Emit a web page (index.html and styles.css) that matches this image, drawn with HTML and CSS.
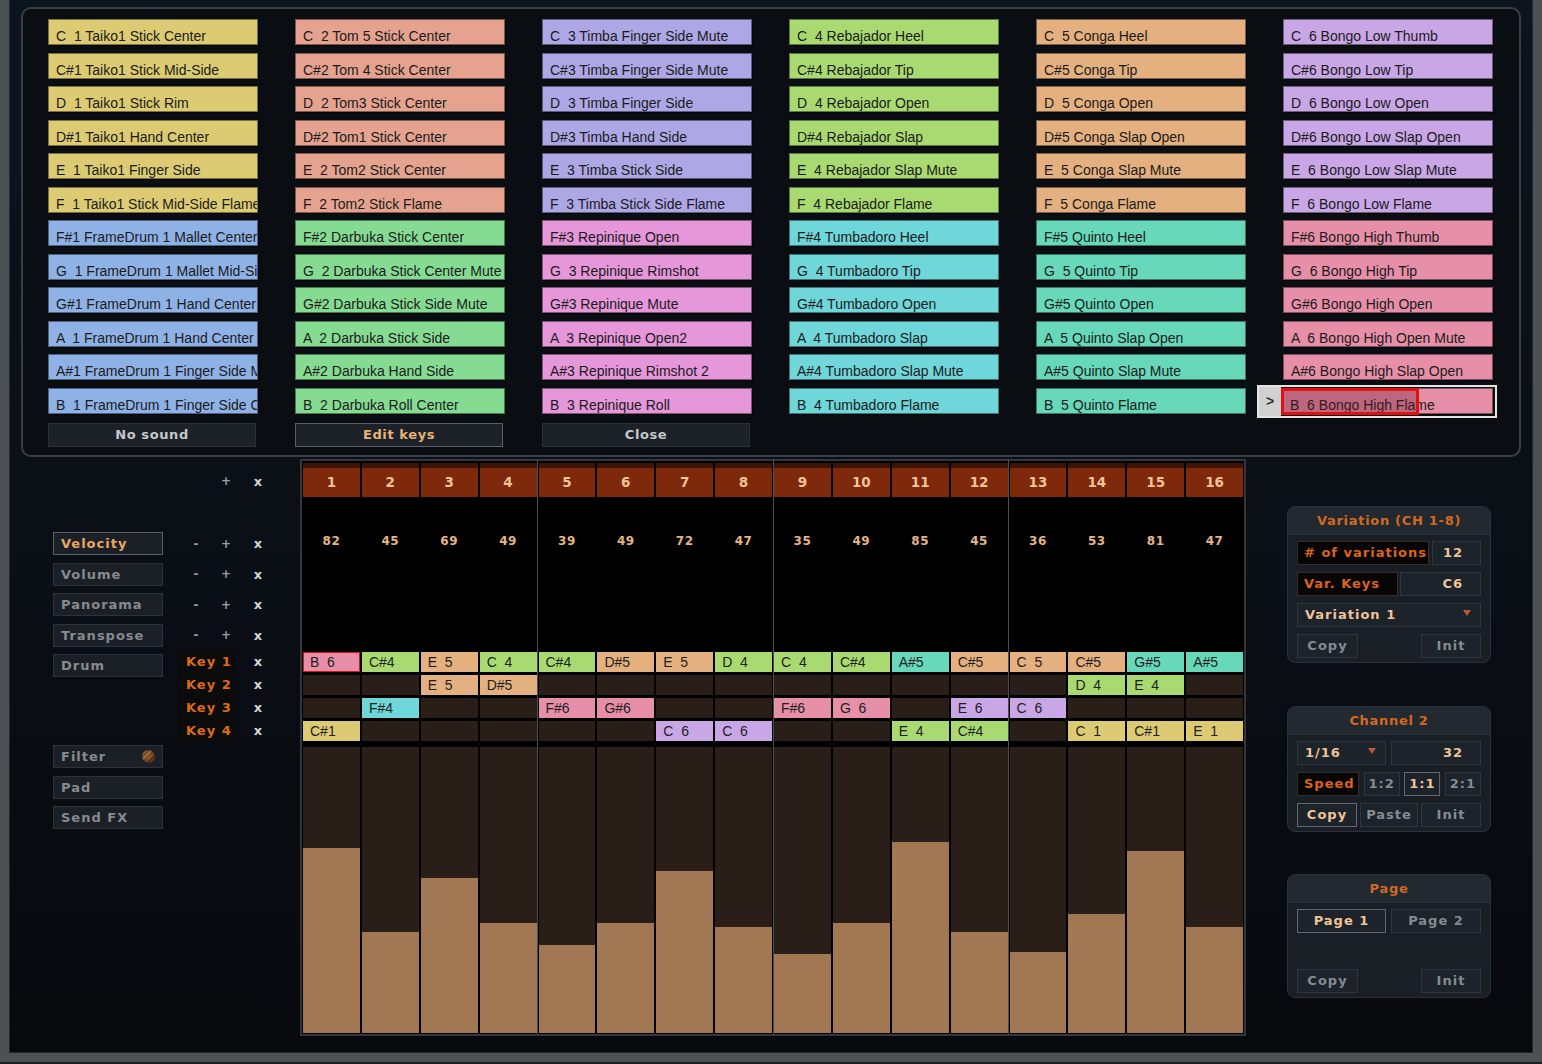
FILE: index.html
```html
<!DOCTYPE html>
<html lang="en">
<head>
    <meta charset="UTF-8">
    <title>Percussion Step Sequencer</title>
    <link rel="stylesheet" href="styles.css">
</head>
<body>
<div class="frame">

    <div class="key-popup">
        <div class="key-grid" id="key-grid"></div>
        <div class="popup-buttons">
            <button class="btn">No sound</button>
            <button class="btn active">Edit keys</button>
            <button class="btn">Close</button>
        </div>
    </div>

    <div class="main">
        <div class="side">
            <div class="ctl-row top-row">
                <span class="op"></span>
                <span class="op plus">+</span>
                <span class="op close">x</span>
            </div>
            <div class="ctl-row first">
                <div class="param active">Velocity</div>
                <span class="op minus">-</span>
                <span class="op plus">+</span>
                <span class="op close">x</span>
            </div>
            <div class="ctl-row">
                <div class="param">Volume</div>
                <span class="op minus">-</span>
                <span class="op plus">+</span>
                <span class="op close">x</span>
            </div>
            <div class="ctl-row">
                <div class="param">Panorama</div>
                <span class="op minus">-</span>
                <span class="op plus">+</span>
                <span class="op close">x</span>
            </div>
            <div class="ctl-row">
                <div class="param">Transpose</div>
                <span class="op minus">-</span>
                <span class="op plus">+</span>
                <span class="op close">x</span>
            </div>
            <div class="drum-row">
                <div class="param">Drum</div>
                <div class="key-labels">
                    <div>Key 1</div>
                    <div>Key 2</div>
                    <div>Key 3</div>
                    <div>Key 4</div>
                </div>
                <div class="key-close">
                    <div>x</div>
                    <div>x</div>
                    <div>x</div>
                    <div>x</div>
                </div>
            </div>
            <div class="ctl-row extra">
                <div class="param">Filter <span class="knob"></span></div>
            </div>
            <div class="ctl-row">
                <div class="param">Pad</div>
            </div>
            <div class="ctl-row">
                <div class="param">Send FX</div>
            </div>
        </div>

        <div class="steps" id="steps"></div>

        <div class="panels">
            <div class="panel var-panel">
                <div class="panel-head">Variation (CH 1-8)</div>
                <div class="panel-body">
                    <div class="prow">
                        <div class="lbl w132"># of variations</div>
                        <div class="pbtn val w49">12</div>
                    </div>
                    <div class="prow">
                        <div class="lbl w101">Var. Keys</div>
                        <div class="pbtn val w81">C6</div>
                    </div>
                    <div class="prow">
                        <div class="pbtn drop w184">Variation 1</div>
                    </div>
                    <div class="prow">
                        <div class="pbtn w61">Copy</div>
                        <div class="pbtn w60">Init</div>
                    </div>
                </div>
            </div>

            <div class="panel chan-panel">
                <div class="panel-head">Channel 2</div>
                <div class="panel-body">
                    <div class="prow">
                        <div class="pbtn drop w89">1/16</div>
                        <div class="pbtn val w90">32</div>
                    </div>
                    <div class="prow">
                        <div class="lbl w62">Speed</div>
                        <div class="pbtn w36">1:2</div>
                        <div class="pbtn on w36">1:1</div>
                        <div class="pbtn w36">2:1</div>
                    </div>
                    <div class="prow">
                        <div class="pbtn on w60">Copy</div>
                        <div class="pbtn w58">Paste</div>
                        <div class="pbtn w60">Init</div>
                    </div>
                </div>
            </div>

            <div class="panel page-panel">
                <div class="panel-head">Page</div>
                <div class="panel-body">
                    <div class="prow pages">
                        <div class="pbtn on w89">Page 1</div>
                        <div class="pbtn w90">Page 2</div>
                    </div>
                    <div class="prow">
                        <div class="pbtn w61">Copy</div>
                        <div class="pbtn w60">Init</div>
                    </div>
                </div>
            </div>
        </div>
    </div>
</div>
<script src="script.js"></script>
</body>
</html>
```

FILE: styles.css
```css
* {
    box-sizing: border-box;
}

body {
    margin: 0;
    background: #1c1d1f;
    font-family: 'DejaVu Sans', sans-serif;
}

.frame {
    width: 1542px;
    height: 1062px;
    border-style: solid;
    border-color: #4e5154;
    border-width: 0 9px 9px 9px;
    background: linear-gradient(180deg, #0c141e 0%, #0b1017 45%, #07090d 100%);
    box-shadow: inset 1px 0 0 #26282b, inset -1px 0 0 #26282b, inset 0 -1px 0 #26282b;
    overflow: hidden;
}

/* key picker popup */

.key-popup {
    margin: 7px 0 0 12px;
    width: 1500px;
    height: 450px;
    border: 2px solid #3a3f46;
    border-radius: 10px;
    background: #0a0d12;
    padding: 10px 0 0 25px;
}

.key-grid {
    display: grid;
    grid-template-columns: repeat(6, 210px);
    grid-template-rows: repeat(12, 26px);
    grid-auto-flow: column;
    column-gap: 37px;
    row-gap: 7.5px;
}

.key {
    font-family: 'Liberation Sans', Arial, sans-serif;
    font-size: 14px;
    color: #1b1b1b;
    line-height: 16px;
    padding: 8px 0 0 7px;
    white-space: pre;
    overflow: hidden;
    border: 1px solid rgba(0, 0, 0, 0.45);
    box-shadow: 1px 1px 0 rgba(0, 0, 0, 0.6);
}

.key-sel {
    position: relative;
    display: flex;
    margin: -3px -4px -4px -26px;
    border: 2px solid #e4e4e4;
    background: #111;
}

.key-sel .key {
    flex: 1;
    margin: 1px 2px 2px 1px;
}

.sel-arrow {
    width: 22px;
    background: #d1d1d1;
    color: #333;
    font-family: 'Liberation Sans', Arial, sans-serif;
    font-weight: bold;
    font-size: 14px;
    text-align: center;
    line-height: 29px;
}

.sel-mark {
    position: absolute;
    left: 22px;
    top: 1px;
    width: 138px;
    height: 27px;
    border: 3px solid #e4100f;
    background: rgba(100, 20, 40, 0.33);
}

.popup-buttons {
    display: grid;
    grid-template-columns: repeat(3, 208px);
    column-gap: 39px;
    margin-top: 9px;
}

.btn {
    height: 24px;
    background: #1d2229;
    border: 1px solid #2a3037;
    color: #c4c8cc;
    font-family: 'DejaVu Sans', sans-serif;
    font-weight: bold;
    font-size: 13px;
    letter-spacing: 0.6px;
    padding: 0;
}

.btn.active {
    border-color: #595f67;
    color: #e9b275;
}

/* lower area */

.main {
    display: flex;
    margin-top: 2px;
}

.side {
    width: 291px;
    padding: 11px 0 0 44px;
}

.ctl-row {
    display: flex;
    align-items: center;
    height: 23px;
    margin-bottom: 7.5px;
}

.top-row {
    height: 22px;
    padding-left: 128px;
    margin-bottom: 40px;
}

.param {
    display: flex;
    justify-content: space-between;
    align-items: center;
    width: 110px;
    height: 23px;
    margin-right: 18px;
    padding: 0 7px;
    background: #1b2027;
    border: 1px solid #2c3239;
    color: #868b90;
    font-weight: bold;
    font-size: 13px;
    letter-spacing: 1px;
}

.param.active {
    border-color: #5b6168;
    color: #e8a85f;
}

.op {
    width: 30px;
    text-align: center;
    font-weight: bold;
    font-size: 12px;
    color: #9b9fa3;
}

.op.close {
    width: 34px;
    color: #d4d6d8;
    font-size: 13px;
}

.drum-row {
    display: flex;
    align-items: flex-start;
    margin-bottom: 3px;
}

.drum-row .param {
    margin-right: 15px;
}

.key-labels {
    width: 57px;
    margin-top: -4px;
    background: #0b0b0c;
}

.key-labels div {
    height: 23px;
    line-height: 23px;
    padding-left: 8px;
    color: #df6a14;
    font-weight: bold;
    font-size: 13px;
    letter-spacing: 1px;
}

.key-close {
    width: 34px;
    margin: -4px 0 0 6px;
}

.key-close div {
    height: 23px;
    line-height: 23px;
    text-align: center;
    color: #d4d6d8;
    font-weight: bold;
    font-size: 13px;
}

.knob {
    width: 13px;
    height: 13px;
    border-radius: 50%;
    background: repeating-linear-gradient(135deg, #7a4a24 0 2px, #a06a3a 2px 4px);
    box-shadow: inset -2px -2px 3px rgba(0, 0, 0, 0.5);
}

/* step grid */

.steps {
    width: 946px;
    height: 577px;
    border: 2px solid #33373c;
    background: #000;
    padding: 2px 1px 1px 1px;
    display: grid;
    grid-template-columns: repeat(16, 1fr);
    column-gap: 2px;
}

.step {
    position: relative;
    display: flex;
    flex-direction: column;
}

.step.beat::before {
    content: '';
    position: absolute;
    left: -1.5px;
    top: -4px;
    bottom: -1px;
    width: 1px;
    background: #4b4f55;
}

.step-num {
    height: 34px;
    border-top: 5px solid #3d1507;
    background: #7e290b;
    color: #f1c398;
    font-weight: bold;
    font-size: 13.5px;
    text-align: center;
    line-height: 28px;
}

.step-vel {
    height: 153px;
    padding-top: 37px;
    line-height: 14px;
    text-align: center;
    color: #e4b487;
    font-weight: bold;
    font-size: 12px;
    letter-spacing: 0.5px;
}

.step-key {
    height: 20px;
    margin-top: 2px;
    background: #2a1f18;
    font-family: 'Liberation Sans', Arial, sans-serif;
    font-size: 14px;
    line-height: 21px;
    color: #1e1e1e;
    padding-left: 7px;
    white-space: pre;
}

.step-key + .step-key {
    margin-top: 3px;
}

.step-key.sel {
    border: 1px solid #d8161a;
    padding-left: 6px;
    line-height: 19px;
}

.step-bar {
    height: 286px;
    margin-top: 6px;
    background: #2a1f18;
    display: flex;
    align-items: flex-end;
}

.bar-fill {
    width: 100%;
    background: #a27753;
}

/* right panels */

.panels {
    width: 204px;
    margin-left: 41px;
    padding-top: 47px;
}

.panel {
    border: 1px solid #2b3138;
    border-radius: 8px;
    background: #1a1f26;
    padding-bottom: 4px;
    overflow: hidden;
}

.var-panel {
    margin-bottom: 43px;
}

.chan-panel {
    margin-bottom: 42px;
}

.panel-head {
    height: 28px;
    line-height: 27px;
    background: #222930;
    border-bottom: 1px solid #2b3138;
    text-align: center;
    color: #d2691f;
    font-weight: bold;
    font-size: 13px;
    letter-spacing: 0.7px;
}

.panel-body {
    padding: 6px 9px 0 9px;
}

.prow {
    display: flex;
    justify-content: space-between;
    height: 24px;
    margin-bottom: 7px;
}

.prow:last-child {
    margin-bottom: 0;
}

.prow.pages {
    margin-bottom: 36px;
}

.pbtn,
.lbl {
    height: 24px;
    line-height: 22px;
    font-weight: bold;
    font-size: 13px;
    letter-spacing: 1px;
    white-space: nowrap;
}

.pbtn {
    background: #1d232a;
    border: 1px solid #30363d;
    color: #858b91;
    text-align: center;
}

.pbtn.on {
    border-color: #61676e;
    color: #efc497;
}

.lbl {
    background: #080505;
    border: 1px solid #2e2e33;
    color: #dd6418;
    padding-left: 6px;
}

.pbtn.val {
    text-align: right;
    padding-right: 17px;
    color: #efc497;
}

.pbtn.drop {
    position: relative;
    text-align: left;
    padding-left: 7px;
    color: #efc497;
}

.pbtn.drop::after {
    content: '';
    position: absolute;
    right: 9px;
    top: 6px;
    border-left: 4px solid transparent;
    border-right: 4px solid transparent;
    border-top: 6px solid #b85a3a;
}

.w36 { width: 36px; }
.w49 { width: 49px; }
.w58 { width: 58px; }
.w60 { width: 60px; }
.w61 { width: 61px; }
.w62 { width: 62px; }
.w81 { width: 81px; }
.w89 { width: 89px; }
.w90 { width: 90px; }
.w101 { width: 101px; }
.w132 { width: 132px; }
.w184 { width: 184px; }
```

FILE: script.js
```js
const NOTES = ['C', 'C#', 'D', 'D#', 'E', 'F', 'F#', 'G', 'G#', 'A', 'A#', 'B'];

// one pair per octave: [C..F, F#..B]
const PALETTE = [
    ['#dccb73', '#8fb2e6'],
    ['#e5a38f', '#86db92'],
    ['#aea7e5', '#e597da'],
    ['#a9da71', '#6fd6d9'],
    ['#e4b07f', '#67d8b9'],
    ['#c9a6e6', '#e78fa9']
];

const DRUMS = [
    ['Taiko1 Stick Center', 'Taiko1 Stick Mid-Side', 'Taiko1 Stick Rim', 'Taiko1 Hand Center',
     'Taiko1 Finger Side', 'Taiko1 Stick Mid-Side Flame', 'FrameDrum 1 Mallet Center',
     'FrameDrum 1 Mallet Mid-Side', 'FrameDrum 1 Hand Center', 'FrameDrum 1 Hand Center',
     'FrameDrum 1 Finger Side Mute', 'FrameDrum 1 Finger Side Center'],
    ['Tom 5 Stick Center', 'Tom 4 Stick Center', 'Tom3 Stick Center', 'Tom1 Stick Center',
     'Tom2 Stick Center', 'Tom2 Stick Flame', 'Darbuka Stick Center', 'Darbuka Stick Center Mute',
     'Darbuka Stick Side Mute', 'Darbuka Stick Side', 'Darbuka Hand Side', 'Darbuka Roll Center'],
    ['Timba Finger Side Mute', 'Timba Finger Side Mute', 'Timba Finger Side', 'Timba Hand Side',
     'Timba Stick Side', 'Timba Stick Side Flame', 'Repinique Open', 'Repinique Rimshot',
     'Repinique Mute', 'Repinique Open2', 'Repinique Rimshot 2', 'Repinique Roll'],
    ['Rebajador Heel', 'Rebajador Tip', 'Rebajador Open', 'Rebajador Slap', 'Rebajador Slap Mute',
     'Rebajador Flame', 'Tumbadoro Heel', 'Tumbadoro Tip', 'Tumbadoro Open', 'Tumbadoro Slap',
     'Tumbadoro Slap Mute', 'Tumbadoro Flame'],
    ['Conga Heel', 'Conga Tip', 'Conga Open', 'Conga Slap Open', 'Conga Slap Mute', 'Conga Flame',
     'Quinto Heel', 'Quinto Tip', 'Quinto Open', 'Quinto Slap Open', 'Quinto Slap Mute', 'Quinto Flame'],
    ['Bongo Low Thumb', 'Bongo Low Tip', 'Bongo Low Open', 'Bongo Low Slap Open', 'Bongo Low Slap Mute',
     'Bongo Low Flame', 'Bongo High Thumb', 'Bongo High Tip', 'Bongo High Open', 'Bongo High Open Mute',
     'Bongo High Slap Open', 'Bongo High Flame']
];

const VELOCITIES = [82, 45, 69, 49, 39, 49, 72, 47, 35, 49, 85, 45, 36, 53, 81, 47];

const KEY_ROWS = [
    ['B6', 'C#4', 'E5', 'C4', 'C#4', 'D#5', 'E5', 'D4', 'C4', 'C#4', 'A#5', 'C#5', 'C5', 'C#5', 'G#5', 'A#5'],
    ['', '', 'E5', 'D#5', '', '', '', '', '', '', '', '', '', 'D4', 'E4', ''],
    ['', 'F#4', '', '', 'F#6', 'G#6', '', '', 'F#6', 'G6', '', 'E6', 'C6', '', '', ''],
    ['C#1', '', '', '', '', '', 'C6', 'C6', '', '', 'E4', 'C#4', '', 'C1', 'C#1', 'E1']
];

function noteLabel(note, octave) {
    return note.length === 1 ? note + '  ' + octave : note + octave;
}

function noteColor(note, octave) {
    return PALETTE[octave - 1][NOTES.indexOf(note) < 6 ? 0 : 1];
}

// key picker
const keyGrid = document.getElementById('key-grid');

DRUMS.forEach((names, o) => {
    const octave = o + 1;
    names.forEach((name, n) => {
        const key = document.createElement('div');
        key.className = 'key';
        key.style.background = noteColor(NOTES[n], octave);
        key.textContent = noteLabel(NOTES[n], octave) + ' ' + name;

        if (octave === 6 && n === 11) {
            const wrap = document.createElement('div');
            wrap.className = 'key-sel';
            const arrow = document.createElement('span');
            arrow.className = 'sel-arrow';
            arrow.textContent = '>';
            const mark = document.createElement('div');
            mark.className = 'sel-mark';
            wrap.append(arrow, key, mark);
            keyGrid.appendChild(wrap);
        } else {
            keyGrid.appendChild(key);
        }
    });
});

// step sequencer
const steps = document.getElementById('steps');

VELOCITIES.forEach((vel, i) => {
    const step = document.createElement('div');
    step.className = 'step' + (i > 0 && i % 4 === 0 ? ' beat' : '');

    const num = document.createElement('div');
    num.className = 'step-num';
    num.textContent = i + 1;
    step.appendChild(num);

    const velCell = document.createElement('div');
    velCell.className = 'step-vel';
    velCell.textContent = vel;
    step.appendChild(velCell);

    KEY_ROWS.forEach((row, r) => {
        const cell = document.createElement('div');
        cell.className = 'step-key';
        const k = row[i];
        if (k) {
            const note = k.slice(0, -1);
            const octave = parseInt(k.slice(-1));
            cell.style.background = noteColor(note, octave);
            cell.textContent = noteLabel(note, octave);
            if (r === 0 && i === 0) cell.classList.add('sel');
        }
        step.appendChild(cell);
    });

    const bar = document.createElement('div');
    bar.className = 'step-bar';
    const fill = document.createElement('div');
    fill.className = 'bar-fill';
    fill.style.height = Math.round(vel / 127 * 286) + 'px';
    bar.appendChild(fill);
    step.appendChild(bar);

    steps.appendChild(step);
});
```
